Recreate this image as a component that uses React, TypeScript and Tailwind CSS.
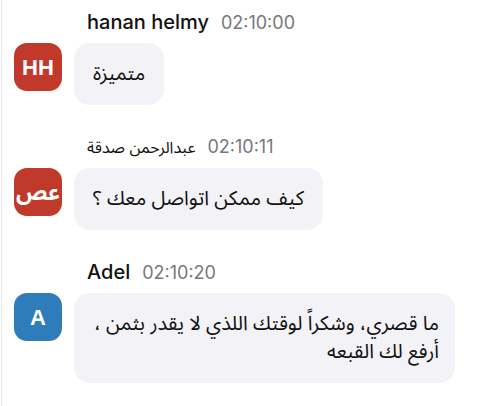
import React from "react";

type Msg = {
  name: string;
  time: string;
  initials: string;
  color: string;
  text: React.ReactNode;
  nameArabic?: boolean;
};

const msgs: Msg[] = [
  { name: "hanan helmy", time: "02:10:00", initials: "HH", color: "bg-[#c0392b]", text: "متميزة" },
  { name: "عبدالرحمن صدقة", time: "02:10:11", initials: "عص", color: "bg-[#c0392b]", text: "كيف ممكن اتواصل معك ؟", nameArabic: true },
  {
    name: "Adel",
    time: "02:10:20",
    initials: "A",
    color: "bg-[#2f7cba]",
    text: (
      <>
        ما قصري، وشكراً لوقتك اللذي لا يقدر بثمن ،
        <br />
        أرفع لك القبعه
      </>
    ),
  },
];

const arabic = "'Noto Sans Arabic', 'Noto Kufi Arabic', 'Noto Naskh Arabic', 'DejaVu Sans', sans-serif";

export default function App() {
  return (
    <div
      className="w-[477px] h-[406px] bg-white overflow-hidden"
      style={{ fontFamily: `Inter, ${arabic}` }}
    >
      <div className="ml-px h-full border-l border-[#e6e6e6] pl-[12px] pr-[22px] pt-[10px] flex flex-col gap-[30px]">
        {msgs.map((m, i) => (
          <div key={i} className="flex flex-col">
            <div className="flex items-baseline gap-[12px] pl-[73px] h-[24px]">
              <span
                className={
                  m.nameArabic
                    ? "text-[16px] leading-[24px] text-[#111]"
                    : "text-[20px] leading-[24px] text-[#111] font-medium"
                }
                dir="auto"
              >
                {m.name}
              </span>
              <span className="text-[18px] leading-[24px] text-[#77777c]">{m.time}</span>
            </div>
            <div className="flex gap-[12px] mt-[9px] items-start">
              <div
                className={`${m.color} w-[48px] h-[48px] shrink-0 rounded-[13px] flex items-center justify-center text-white font-bold text-[22px]`}
                style={{ fontFamily: `'Liberation Sans', ${arabic}` }}
              >
                {m.initials}
              </div>
              <div
                dir="rtl"
                className={`bg-[#f2f2f7] rounded-[16px] py-[17px] text-[20px] leading-[28px] text-[#111] ${i === 2 ? "flex-1 px-[16px] whitespace-nowrap" : "px-[19px]"}`}
                style={{ fontFamily: arabic }}
              >
                {m.text}
              </div>
            </div>
          </div>
        ))}
      </div>
    </div>
  );
}
